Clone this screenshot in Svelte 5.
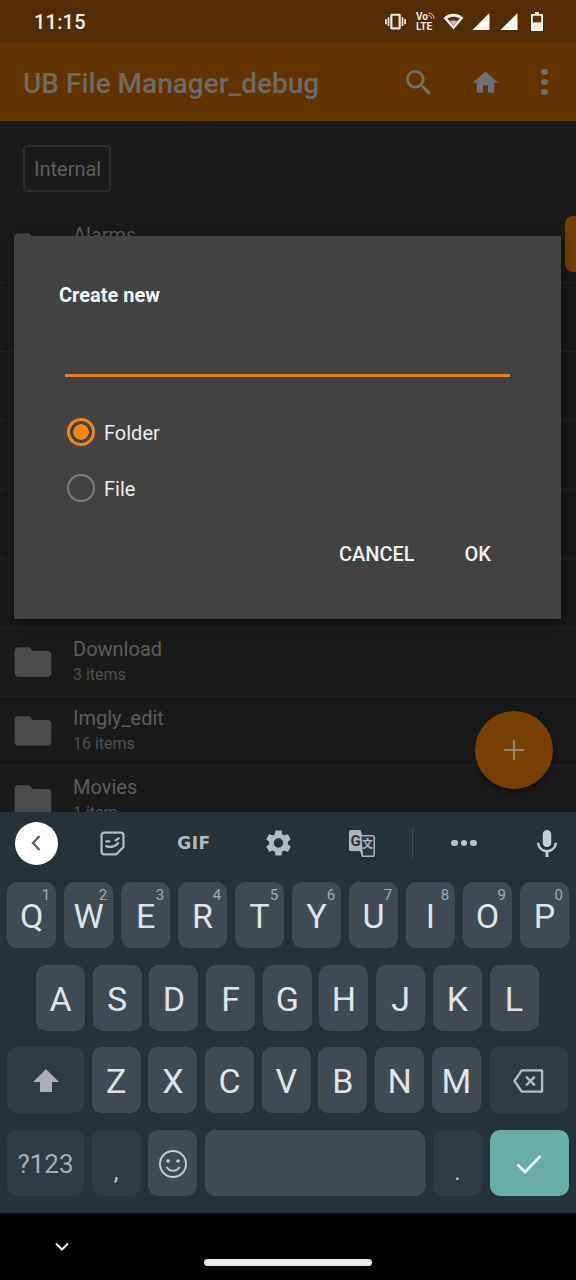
<script>
  const rows = [
    { name: 'Alarms', sub: '' }, { name: '', sub: '' }, { name: '', sub: '' }, { name: '', sub: '' },
    { name: '', sub: '' }, { name: '', sub: '' },
    { name: 'Download', sub: '3 items' }, { name: 'Imgly_edit', sub: '16 items' }, { name: 'Movies', sub: '1 item' }
  ];
  const top = [['Q','1'],['W','2'],['E','3'],['R','4'],['T','5'],['Y','6'],['U','7'],['I','8'],['O','9'],['P','0']];
  const mid = ['A','S','D','F','G','H','J','K','L'];
  const low = ['Z','X','C','V','B','N','M'];
  const folder = 'M10 4H4c-1.1 0-2 .9-2 2v12c0 1.1.9 2 2 2h16c1.1 0 2-.9 2-2V8c0-1.1-.9-2-2-2h-8l-2-2z';
</script>

<div class="phone">
  <header class="status">
    <span class="time">11:15</span>
    <div class="sys">
      <svg class="vib" viewBox="0 0 24 24" fill="#efe6dc"><path d="M0 15h2V9H0v6zm3 2h2V7H3v10zm19-8v6h2V9h-2zm-3 8h2V7h-2v10zM16.5 3h-9C6.67 3 6 3.67 6 4.5v15c0 .83.67 1.5 1.5 1.500h9c.83 0 1.5-.67 1.5-1.5v-15c0-.83-.67-1.5-1.5-1.500zM15.500 18.500h-7v-13h7z"/></svg>
      <div class="volte">
        <span class="vo">Vo<svg viewBox="0 0 7 7" width="7" height="7" fill="none" stroke="#e6dbcf" stroke-width="1"><path d="M0.500 1C3.500 1 6 3.500 6 6.500M0.500 3.500C2.200 3.500 3.500 4.800 3.500 6.500"/></svg></span>
        <span>LTE</span>
      </div>
      <svg class="wifi" viewBox="0 0 22 18"><path d="M11 17.5 0.5 5.2C3.4 2.3 7 .8 11 .8s7.6 1.5 10.5 4.4z" fill="#f4eee8"/><path d="M11 13.6 4.4 5.8C6.3 4.6 8.600 4 11 4s4.700.6 6.600 1.800z" fill="#5b3208"/><path d="M11 13 7.200 8.600c2.300-1 5.300-1 7.600 0z" fill="#b9c4cc"/></svg>
      <svg class="sig" viewBox="0 0 18 18"><path d="M18 0v18H0z" fill="#fbf8f4"/></svg>
      <svg class="sig two" viewBox="0 0 18 18"><path d="M18 0v18H0z" fill="#fbf8f4"/></svg>
      <svg class="bat" viewBox="0 0 12 19"><path d="M4 0h4v2h3a1 1 0 0 1 1 1v15a1 1 0 0 1-1 1H1a1 1 0 0 1-1-1V3a1 1 0 0 1 1-1h3z" fill="#f7f2ec"/><rect x="1.800" y="3.800" width="8.400" height="6.600" fill="#5b3208"/></svg>
    </div>
  </header>

  <div class="appbar">
    <h1>UB File Manager_debug</h1>
    <svg class="ico search" viewBox="3 3 17.5 17.5" fill="#6f6f6a"><path d="M15.5 14h-.79l-.28-.27C15.41 12.59 16 11.11 16 9.5 16 5.91 13.09 3 9.5 3S3 5.91 3 9.5 5.91 16 9.5 16c1.61 0 3.09-.59 4.23-1.57l.27.28v.79l5 4.99L20.49 19l-4.99-5zm-6 0C7.01 14 5 11.99 5 9.5S7.01 5 9.5 5 14 7.01 14 9.5 11.99 14 9.5 14z"/></svg>
    <svg class="ico home" viewBox="2 3 20 17" fill="#6b7076"><path d="M10 20v-6h4v6h5v-8h3L12 3 2 12h3v8z"/></svg>
    <div class="more"><i></i><i></i><i></i></div>
  </div>

  <main class="files">
    <div class="crumbs"><span class="chip">Internal</span></div>
    {#each rows as r}
      <div class="row">
        <svg class="folder" viewBox="0 0 24 24"><path d={folder} fill="#4b4b4b"/></svg>
        <div class="txt">
          <div class="name">{r.name}</div>
          <div class="sub">{r.sub}</div>
        </div>
      </div>
    {/each}
    <div class="thumb"></div>
    <div class="fab">
      <svg viewBox="0 0 18 18" width="20" height="20"><path d="M9 0v18M0 9h18" stroke="#8f8071" stroke-width="2"/></svg>
    </div>
  </main>

  <section class="dialog">
    <h2>Create new</h2>
    <div class="input"></div>
    <div class="radio"><span class="dot on"></span><span class="lbl">Folder</span></div>
    <div class="radio second"><span class="dot"></span><span class="lbl">File</span></div>
    <div class="actions"><span>CANCEL</span><span>OK</span></div>
  </section>

  <section class="kb">
    <div class="tools">
      <div class="cell"><div class="back"><svg viewBox="0 0 12 18" width="12" height="18"><path d="M9.500 2 3 9l6.500 7" fill="none" stroke="#5c6266" stroke-width="2.400"/></svg></div></div>
      <div class="cell"><svg viewBox="0 0 24 24" width="25" height="25" fill="none" stroke="#b4bbc0" stroke-width="2.200"><path d="M4 1.500h16a2.500 2.500 0 0 1 2.500 2.500v11.500L15.500 22.500H4A2.500 2.500 0 0 1 1.500 20V4A2.500 2.500 0 0 1 4 1.500z"/><path d="M6 10h3M15 9l3-2M6 14.500c4 1.500 8 1 11.500-3" stroke-linecap="round"/></svg></div>
      <div class="cell gif">GIF</div>
      <div class="cell"><svg viewBox="2.500 2 19 20" width="25" height="26" fill="#b4bbc0"><path d="M19.140 12.940c.04-.3.06-.61.06-.94 0-.32-.02-.64-.07-.94l2.030-1.580c.18-.14.23-.41.12-.61l-1.920-3.320c-.12-.22-.37-.29-.59-.22l-2.390.96c-.5-.38-1.030-.7-1.620-.94l-.36-2.540c-.04-.24-.24-.41-.48-.41h-3.840c-.24 0-.43.17-.47.41l-.36 2.540c-.59.24-1.130.57-1.620.94l-2.390-.96c-.22-.08-.47 0-.59.22L2.740 8.870c-.12.21-.08.47.12.61l2.030 1.580c-.05.3-.09.63-.09.94s.02.64.07.94l-2.030 1.580c-.18.14-.23.41-.12.61l1.920 3.320c.12.22.37.29.59.22l2.390-.96c.5.38 1.030.7 1.620.94l.36 2.540c.05.24.24.41.48.41h3.840c.24 0 .44-.17.47-.41l.36-2.540c.59-.24 1.130-.56 1.620-.94l2.390.96c.22.08.47 0 .59-.22l1.920-3.320c.12-.22.07-.47-.12-.61l-2.010-1.580zM12 15.600c-1.980 0-3.600-1.620-3.600-3.600s1.620-3.600 3.600-3.600 3.600 1.620 3.600 3.600-1.620 3.600-3.600 3.600z"/></svg></div>
      <div class="cell"><svg viewBox="0 0 26 27" width="26" height="27"><path d="M1.500 0h10l1.500 5h11a2 2 0 0 1 2 2v18a2 2 0 0 1-2 2H13l-2-6H1.500A1.500 1.500 0 0 1 0 19.500v-18A1.500 1.500 0 0 1 1.500 0z" fill="#aeb5ba"/><path d="M12.500 6.500h12v19H14z" fill="#2c373e"/><text x="1.500" y="16" font-size="15" font-weight="700" font-family="Roboto, sans-serif" fill="#2c373e">G</text><text x="13" y="18" font-size="11" font-weight="700" font-family="'Noto Sans CJK SC', sans-serif" fill="#aeb5ba">文</text></svg></div>
      <div class="cell"><div class="sep"></div></div>
      <div class="cell dots"><i></i><i></i><i></i></div>
      <div class="cell mic"><svg viewBox="5 2 14 19" width="20" height="27" fill="#c6ccd0"><path d="M12 14c1.660 0 2.990-1.340 2.990-3L15 5c0-1.660-1.340-3-3-3S9 3.340 9 5v6c0 1.660 1.340 3 3 3zm5.300-3c0 3-2.540 5.100-5.300 5.100S6.700 14 6.700 11H5c0 3.410 2.720 6.230 6 6.720V21h2v-3.280c3.280-.48 6-3.300 6-6.720h-1.700z"/></svg></div>
    </div>

    <div class="keys">
      <div class="krow">
        {#each top as [l, n]}
          <div class="key">{l}<sup>{n}</sup></div>
        {/each}
      </div>
      <div class="krow indent">
        {#each mid as l}<div class="key">{l}</div>{/each}
      </div>
      <div class="krow">
        <div class="key wide fn"><svg viewBox="0 0 26 26" width="26" height="26"><path d="M13 1 0 14h7v10h12V14h7z" fill="#a9afb3"/></svg></div>
        {#each low as l}<div class="key">{l}</div>{/each}
        <div class="key end fn"><svg viewBox="0 0 32 26" width="31" height="26" fill="none" stroke="#b5bbbf" stroke-width="2.400"><path d="M9 2h21v22H9L1.500 13z" stroke-linejoin="round"/><path d="M13.500 8.500l9 9M22.500 8.500l-9 9"/></svg></div>
      </div>
      <div class="krow">
        <div class="key wide fn sym">?123</div>
        <div class="key fn punct">,</div>
        <div class="key"><svg viewBox="0 0 30 30" width="30" height="30" fill="none" stroke="#c3c8cc" stroke-width="2"><circle cx="15" cy="15" r="13"/><circle cx="10" cy="12" r="1.800" fill="#c3c8cc" stroke="none"/><circle cx="20" cy="12" r="1.800" fill="#c3c8cc" stroke="none"/><path d="M8.500 18c3 5 10 5 13 0"/></svg></div>
        <div class="key space"></div>
        <div class="key fn punct">.</div>
        <div class="key end go"><svg viewBox="0 0 26 20" width="26" height="20"><path d="M1.500 10.500 9 18 24.500 2" fill="none" stroke="#eef5f4" stroke-width="2.800"/></svg></div>
      </div>
    </div>
  </section>

  <footer class="nav">
    <svg class="down" viewBox="0 0 14 9" width="14" height="9"><path d="M1 1.500 7 7.500l6-6" fill="none" stroke="#f2f2f2" stroke-width="2"/></svg>
    <div class="pill"></div>
  </footer>
</div>

<style>
  :global(body) { margin: 0; background: #000; }
  .phone {
    position: relative;
    width: 576px;
    height: 1280px;
    overflow: hidden;
    font-family: Roboto, "Liberation Sans", sans-serif;
    background: #1a1a1a;
  }

  .status {
    height: 43px;
    box-sizing: border-box;
    background: #522c02;
    display: flex;
    align-items: center;
    justify-content: space-between;
    padding: 0 33px 0 34px;
  }
  .time { color: #f6f1ea; font-size: 20px; font-weight: 500; letter-spacing: .2px; }
  .sys { display: flex; align-items: center; }
  .vib { width: 21px; height: 21px; margin-right: 10px; }
  .volte {
    display: flex; flex-direction: column; color: #f0e8df; width: 20px; margin-right: 7px;
    font-size: 10px; line-height: 10px; font-weight: 700;
  }
  .vo { display: flex; align-items: flex-start; }
  .wifi { width: 21px; height: 17px; margin-right: 8px; }
  .sig { width: 18px; height: 17px; }
  .sig.two { margin-left: 10px; }
  .bat { width: 12px; height: 19px; margin-left: 13px; }

  .appbar {
    height: 78px;
    box-sizing: border-box;
    background: #633300;
    display: flex;
    align-items: center;
    padding: 0 28px 0 23px;
  }
  h1 {
    margin: 0; flex: 1; padding-top: 2px;
    font-size: 28px; font-weight: 500; color: #6d6a62; white-space: nowrap;
  }
  .ico { width: 25px; height: 25px; }
  .home { margin-left: 42px; height: 24px; }
  .more { margin-left: 43px; display: flex; flex-direction: column; gap: 4px; }
  .more i { display: block; width: 7px; height: 6px; border-radius: 50%; background: #6f6f6a; }

  .files { position: relative; height: 691px; overflow: hidden; background: #1a1a1a; }
  .crumbs { height: 93px; box-sizing: border-box; padding: 24px 0 0 23px; }
  .chip {
    display: inline-flex; align-items: center; box-sizing: border-box;
    height: 47px; width: 88px; padding-left: 9px;
    border: 2px solid #2c2c2c; border-radius: 4px;
    color: #5e5e5e; font-size: 20px;
  }
  .row {
    height: 69px; box-sizing: border-box;
    display: flex; align-items: center;
    padding-left: 11px;
    border-bottom: 1px solid #232323;
  }
  .folder { width: 44px; height: 44px; flex: none; margin-right: 18px; }
  .txt { margin-bottom: 3px; }
  .name { height: 26px; line-height: 26px; font-size: 20px; color: #5c5c5c; }
  .sub { height: 22px; line-height: 22px; margin-top: 2px; font-size: 16px; color: #4f4f4f; }
  .thumb {
    position: absolute; right: 0; top: 95px; width: 11px; height: 56px;
    border-radius: 8px 0 0 8px; background: #734000;
  }
  .fab {
    position: absolute; left: 475px; top: 590px; width: 78px; height: 78px;
    border-radius: 50%; background: #774000;
    display: flex; align-items: center; justify-content: center;
    box-shadow: 0 3px 8px rgba(0,0,0,.4);
  }

  .dialog {
    position: absolute; left: 14px; top: 236px; width: 547px; height: 383px;
    box-sizing: border-box; background: #424242; color: #f1f1f1;
    padding-left: 45px;
    box-shadow: 0 4px 14px rgba(0,0,0,.5);
  }
  h2 { margin: 0; padding-top: 48px; font-size: 20px; line-height: 22px; font-weight: 700; color: #f5f5f5; }
  .input { margin: 68px 0 0 6px; width: 445px; height: 3px; background: #e07f1d; }
  .radio {
    display: flex; align-items: center; gap: 9px;
    margin: 41px 0 0 8px; height: 28px;
    font-size: 20px; color: #ececec;
  }
  .lbl { padding-top: 1px; }
  .radio.second { margin-top: 28px; }
  .dot {
    box-sizing: border-box; width: 28px; height: 28px; border-radius: 50%;
    border: 2px solid #7c7c7c; display: block; position: relative;
  }
  .dot.on { border: 3px solid #f08312; background: radial-gradient(circle, #f5850f 0 7.500px, transparent 8px); }
  .actions {
    display: flex; justify-content: flex-end; gap: 50px;
    margin-top: 40px; padding-right: 70px;
    font-size: 20px; line-height: 24px; font-weight: 500; color: #f0f0f0;
  }

  .kb { height: 401px; box-sizing: border-box; background: #263238; }
  .tools {
    height: 62px;
    display: grid;
    grid-template-columns: 72px 80px 84px 84px 84px 16px 88px 1fr;
  }
  .cell { display: flex; align-items: center; justify-content: center; }
  .back {
    width: 43px; height: 43px; border-radius: 50%; background: #fff;
    display: flex; align-items: center; justify-content: center;
  }
  .gif { font-family: "DejaVu Sans", sans-serif; font-weight: 700; font-size: 17px; color: #b4bbc0; letter-spacing: .5px; }
  .sep { width: 1px; height: 32px; background: #3b464d; }
  .dots { gap: 3px; }
  .dots i { width: 6.500px; height: 6.500px; border-radius: 50%; background: #bcc3c7; display: block; }
  .mic { padding-left: 10px; }

  .keys { padding: 8px 7px 0; display: flex; flex-direction: column; gap: 16.500px; }
  .krow { display: flex; gap: 7.700px; height: 66px; }
  .krow.indent { padding-left: 29px; }
  .key {
    position: relative;
    flex: 0 0 49px; height: 66px;
    border-radius: 10px; background: #404a52;
    display: flex; align-items: center; justify-content: center;
    color: #dfe3e6; font-size: 34px;
    padding-top: 2px; box-sizing: border-box;
  }
  .krow:first-child .key { flex: 1 1 0; }
  .key sup {
    position: absolute; right: 6px; top: 3px;
    font-size: 15px; line-height: 20px; color: #a2a9ad;
  }
  .wide { flex-basis: 77px; }
  .end { flex: 0 0 79.500px; }
  .fn { background: #2f3b42; }
  .sym { font-size: 26px; color: #a6adb1; }
  .punct { font-size: 24px; color: #c3c8cc; padding-top: 18px; }
  .space { flex: 1 1 0; }
  .go { background: #68ada6; }

  .nav { height: 67px; background: #000; position: relative; }
  .down { position: absolute; left: 55px; top: 29px; }
  .pill {
    position: absolute; left: 204px; top: 46px; width: 168px; height: 7px;
    border-radius: 4px; background: #ececec;
  }
</style>
